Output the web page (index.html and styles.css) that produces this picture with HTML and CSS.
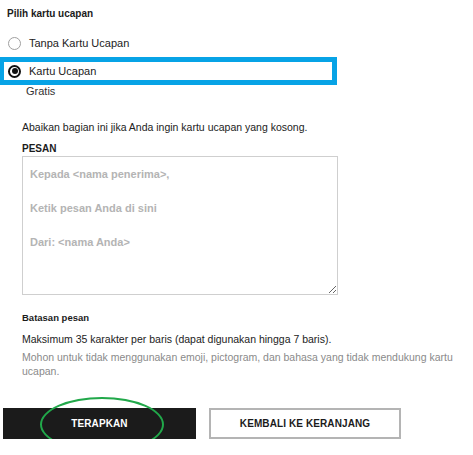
FILE: index.html
```html
<!DOCTYPE html>
<html lang="id">
  <head>
    <meta charset="UTF-8" />
    <title>Kartu ucapan</title>
    <link rel="stylesheet" href="styles.css">
  </head>
  <body>
    <h2 class="title">Pilih kartu ucapan</h2>
    <label class="option">
      <span class="radio"></span>
      Tanpa Kartu Ucapan
    </label>
    <div class="highlight">
      <label class="option selected">
        <span class="radio checked"></span>
        Kartu Ucapan
      </label>
    </div>
    <p class="free">Gratis</p>

    <section class="message">
      <p class="hint">Abaikan bagian ini jika Anda ingin kartu ucapan yang kosong.</p>
      <div class="label">PESAN</div>
      <textarea class="box" placeholder="Kepada &lt;nama penerima&gt;,

Ketik pesan Anda di sini

Dari: &lt;nama Anda&gt;"></textarea>
      <div class="sub">Batasan pesan</div>
      <p class="rule">Maksimum 35 karakter per baris (dapat digunakan hingga 7 baris).</p>
      <p class="note">Mohon untuk tidak menggunakan emoji, pictogram, dan bahasa yang tidak mendukung kartu ucapan.</p>
    </section>

    <div class="actions">
      <button class="apply">TERAPKAN</button>
      <button class="back">KEMBALI KE KERANJANG</button>
    </div>
  </body>
</html>
```

FILE: styles.css
```css
body {
  font-family: "Liberation Sans", Arial, sans-serif;
  color: #1b1b1b;
  background: #fff;
  margin: 0;
  width: 473px;
}
.title,
.label,
.sub,
.actions button {
  font-family: "Liberation Sans", Arial, sans-serif;
  font-weight: bold;
}
.title {
  margin: 0;
  padding: 7px 0 0 7px;
  font-size: 10px;
  line-height: 13px;
}
.option {
  display: flex;
  align-items: center;
  gap: 8px;
  font-size: 11px;
  line-height: 16px;
  padding-left: 8px;
  margin-top: 15px;
  color: #222;
}
.radio {
  width: 11px;
  height: 11px;
  border: 1px solid #a0a0a0;
  border-radius: 50%;
  box-sizing: content-box;
  position: relative;
}
.radio.checked {
  border: 2px solid #111;
  width: 9px;
  height: 9px;
}
.radio.checked::after {
  content: "";
  position: absolute;
  left: 1.5px;
  top: 1.5px;
  width: 6px;
  height: 6px;
  border-radius: 50%;
  background: #111;
}
.highlight {
  margin-top: 6px;
  width: 328px;
  height: 18px;
  border: 5px solid #07a3e6;
  border-left-width: 4px;
  display: flex;
  align-items: center;
}
.highlight .option {
  margin: 0;
  padding-left: 4px;
}
.free {
  margin: 0;
  padding-left: 26px;
  font-size: 11px;
  line-height: 13px;
  color: #333;
}
.message {
  padding-left: 22px;
}
.hint {
  margin: 22px 0 0;
  font-size: 10.5px;
  line-height: 15px;
  color: #222;
}
.label {
  margin-top: 8px;
  font-size: 10px;
  line-height: 12px;
}
.box {
  display: block;
  width: 316px;
  height: 139px;
  box-sizing: border-box;
  margin-top: 1px;
  border: 1px solid #cfcfcf;
  padding: 9px 7px;
  font-family: "Liberation Sans", Arial, sans-serif;
  font-size: 11px;
  line-height: 17px;
  resize: both;
}
.box::placeholder {
  color: #b4b4b4;
  font-weight: bold;
}
.sub {
  margin-top: 17px;
  font-size: 9.5px;
  line-height: 12px;
}
.rule {
  margin: 8px 0 0;
  font-size: 10.5px;
  line-height: 15px;
  color: #222;
}
.note {
  margin: 3px 0 0;
  font-size: 10.5px;
  line-height: 14px;
  color: #8a8a8a;
}
.actions {
  display: flex;
  gap: 13px;
  padding-left: 3px;
  margin-top: 30px;
}
.actions button {
  height: 31px;
  font-size: 10px;
  letter-spacing: 0.1px;
  cursor: pointer;
}
.apply {
  width: 193px;
  background: #1b1b1b;
  border: none;
  color: #fff;
  position: relative;
}
.apply::after {
  content: "";
  position: absolute;
  left: 37px;
  top: -11px;
  width: 120px;
  height: 51px;
  border: 2px solid #21a84a;
  border-radius: 50%;
}
.back {
  width: 192px;
  background: #fff;
  border: 2px solid #b4b4b4;
  color: #1b1b1b;
}
```
